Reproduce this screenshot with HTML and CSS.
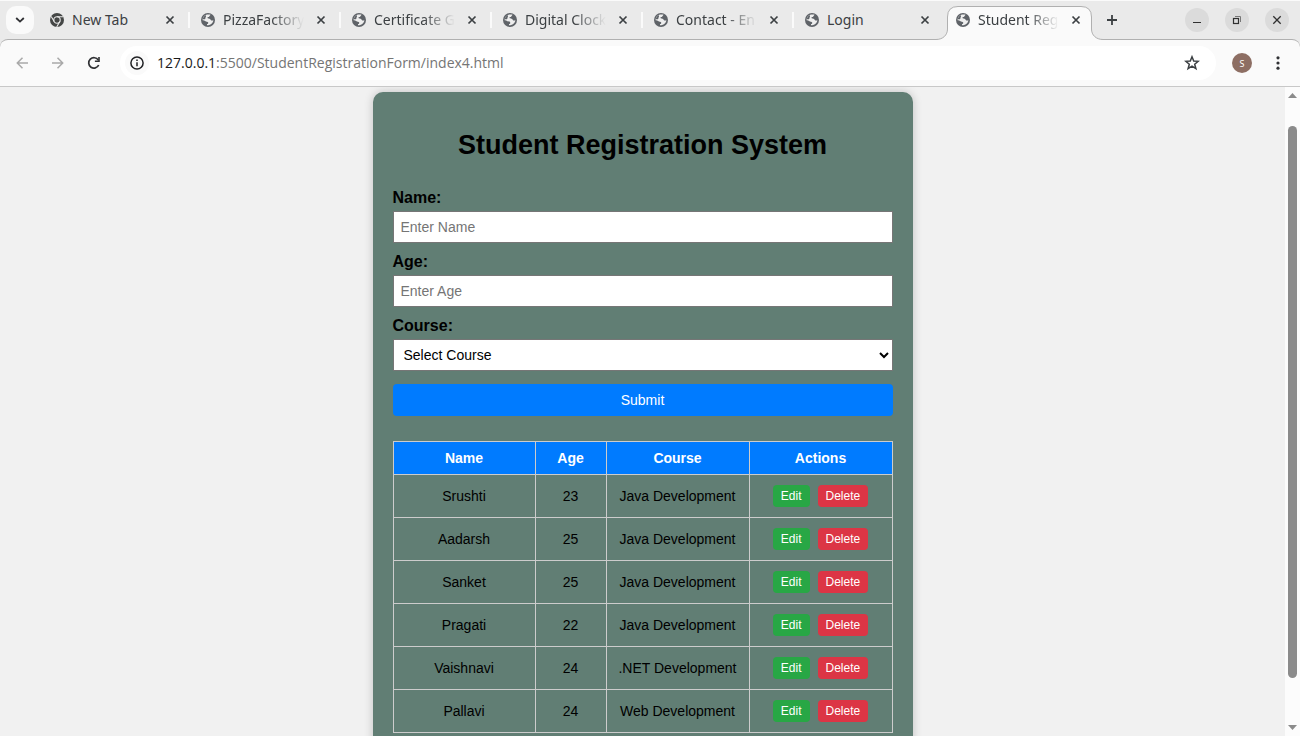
FILE: index.html
```html
<!DOCTYPE html>
<html lang="en">
<head>
<meta charset="utf-8">
<title>Student Registration System</title>
<link rel="stylesheet" href="styles.css">
</head>
<body>
<svg class="defs" aria-hidden="true">
  <symbol id="globe" viewBox="0 0 14 14">
    <circle cx="7" cy="7" r="7" fill="#5f6368"/>
    <path d="M6.2 1.6 9.4 1.5C9.3 2.7 8.4 2.8 8.3 3.6 8.1 4.4 6.5 4 6.4 4.8 6.3 5.8 9.3 5.2 9.8 7 10.2 8 11.7 7.5 12.4 7.3 12.2 9 11 10.6 9.4 11.5 8.6 11.9 7.5 12.4 6 12.3L6 11C7.1 10.9 7.4 10.3 7.2 9.4 6.9 8.2 5.1 8.8 4.1 7.9 3.4 7.2 2.3 7.1 1.6 7.2 1.5 4.6 3.4 2 6.2 1.6Z" fill="#eee"/>
    <path d="M1.5 6.2C2.4 4.6 2.6 3.4 4.7 2.1L5 3.8C4.3 4.2 4.7 5.2 4.2 6.1 3.5 6.6 2.4 6.2 1.5 6.2Z" fill="#5f6368"/>
  </symbol>
  <symbol id="cross" viewBox="0 0 10 10"><path d="M1.5 1.5 8.5 8.5M8.5 1.5 1.5 8.5" fill="none" stroke="#3c4043" stroke-width="1.7"/></symbol>
</svg>

<header class="browser">
  <div class="tabstrip">
    <button class="tab-search" aria-label="Search tabs"><svg width="10" height="6" viewBox="0 0 10 6"><path d="M1.2 1 5 4.6 8.8 1" fill="none" stroke="#303134" stroke-width="1.8"/></svg></button>
    <nav class="tabs">
      <div class="tab"><svg class="favicon" viewBox="0 0 14 14"><circle cx="7" cy="7" r="7" fill="#454746"/><g fill="none" stroke="#eaeaea" stroke-width="1.1"><circle cx="7" cy="7" r="3.2"/><path d="M7 3.8H13.2M4.2 8.6 1.2 3.4M9.8 8.6 6.7 14"/></g></svg><span class="tab-title">New Tab</span><button class="close" aria-label="Close New Tab"><svg><use href="#cross"/></svg></button></div>
      <div class="tab"><svg class="favicon"><use href="#globe"/></svg><span class="tab-title fade">PizzaFactory</span><button class="close" aria-label="Close PizzaFactory"><svg><use href="#cross"/></svg></button></div>
      <div class="tab"><svg class="favicon"><use href="#globe"/></svg><span class="tab-title fade">Certificate G</span><button class="close" aria-label="Close Certificate"><svg><use href="#cross"/></svg></button></div>
      <div class="tab"><svg class="favicon"><use href="#globe"/></svg><span class="tab-title fade">Digital Clock</span><button class="close" aria-label="Close Digital Clock"><svg><use href="#cross"/></svg></button></div>
      <div class="tab"><svg class="favicon"><use href="#globe"/></svg><span class="tab-title fade">Contact - En</span><button class="close" aria-label="Close Contact"><svg><use href="#cross"/></svg></button></div>
      <div class="tab last"><svg class="favicon"><use href="#globe"/></svg><span class="tab-title">Login</span><button class="close" aria-label="Close Login"><svg><use href="#cross"/></svg></button></div>
      <div class="tab active"><svg class="tab-shape" width="167" height="34" viewBox="0 0 167 34"><path d="M0 33.5C7 33.5 11.5 29 11.5 23V11Q11.5.5 22 .5H145Q155.500.5 155.500 11V23C155.500 29 160 33.500 167 33.500V34H0Z" fill="#fafafa"/><path d="M0 33.500C7 33.500 11.500 29 11.500 23V11Q11.500.5 22 .5H145Q155.500.5 155.500 11V23C155.500 29 160 33.500 167 33.500" fill="none" stroke="#b0b0b0"/></svg><svg class="favicon"><use href="#globe"/></svg><span class="tab-title fade">Student Reg</span><button class="close" aria-label="Close Student Registration"><svg><use href="#cross"/></svg></button></div>
    </nav>
    <button class="new-tab" aria-label="New tab"><svg width="12" height="12" viewBox="0 0 12 12"><path d="M6 1V11M1 6H11" stroke="#3c4043" stroke-width="1.8"/></svg></button>
    <div class="window-controls">
      <button aria-label="Minimize"><svg width="10" height="10" viewBox="0 0 10 10"><path d="M1 7.500H9" stroke="#303030"/></svg></button>
      <button aria-label="Restore"><svg width="10" height="10" viewBox="0 0 10 10" fill="none"><path d="M3 1.500H8.500V7" stroke="#777"/><rect x="1.500" y="3.500" width="5" height="5" stroke="#303030" stroke-width="1.2"/></svg></button>
      <button aria-label="Close window"><svg width="10" height="10" viewBox="0 0 10 10"><path d="M1.300 1.300 8.700 8.700M8.700 1.300 1.300 8.700" stroke="#303030" stroke-width="1.300"/></svg></button>
    </div>
  </div>
  <div class="toolbar">
    <button class="tool" aria-label="Back"><svg width="12" height="12" viewBox="0 0 12 12"><path d="M12 6H1.500M6.500.8 1.300 6 6.500 11.200" fill="none" stroke="#a9a9a9" stroke-width="1.500"/></svg></button>
    <button class="tool" aria-label="Forward"><svg width="12" height="12" viewBox="0 0 12 12"><path d="M0 6H10.500M5.500.8 10.700 6 5.500 11.200" fill="none" stroke="#a9a9a9" stroke-width="1.500"/></svg></button>
    <button class="tool" aria-label="Reload"><svg width="14" height="14" viewBox="0 0 14 14"><path d="M11.700 9A5.200 5.200 0 1 1 11.300 4.100" fill="none" stroke="#303134" stroke-width="1.700"/><path d="M12.800 1V6H7.900V4.400H11.200V1Z" fill="#303134"/></svg></button>
    <div class="omnibox">
      <button class="site-info" aria-label="Site information"><svg width="14" height="14" viewBox="0 0 14 14"><circle cx="7" cy="7" r="6.100" fill="none" stroke="#202124" stroke-width="1.500"/><path d="M7 6.200V10.200M7 3.600V5.100" stroke="#202124" stroke-width="1.500"/></svg></button>
      <span class="url"><b>127.0.0.1</b>:5500/StudentRegistrationForm/index4.html</span>
      <button class="star" aria-label="Bookmark"><svg width="16" height="16" viewBox="0 0 16 16"><path d="M8 1.800 9.700 6 14.200 6.300 10.700 9.200 11.900 13.700 8 11.200 4.100 13.700 5.300 9.200 1.800 6.300 6.300 6Z" fill="none" stroke="#3c4043" stroke-width="1.500"/></svg></button>
    </div>
    <button class="avatar" aria-label="Profile">S</button>
    <button class="menu" aria-label="Menu"><svg width="4" height="14" viewBox="0 0 4 14" fill="#303134"><circle cx="2" cy="1.800" r="1.600"/><circle cx="2" cy="7" r="1.600"/><circle cx="2" cy="12.200" r="1.600"/></svg></button>
  </div>
</header>

<div class="viewport">
  <main class="page">
    <section class="card">
      <h2>Student Registration System</h2>
      <form>
        <label for="name">Name:</label>
        <input id="name" type="text" placeholder="Enter Name">
        <label for="age">Age:</label>
        <input id="age" type="text" placeholder="Enter Age">
        <label for="course">Course:</label>
        <select id="course"><option>Select Course</option><option>Java Development</option><option>.NET Development</option><option>Web Development</option></select>
        <button class="submit" type="button">Submit</button>
      </form>
      <table>
        <colgroup><col><col class="narrow"><col class="wide"><col class="wide"></colgroup>
        <thead><tr><th>Name</th><th>Age</th><th>Course</th><th>Actions</th></tr></thead>
        <tbody>
          <tr><td>Srushti</td><td>23</td><td>Java Development</td><td><div class="actions"><button class="edit">Edit</button><button class="delete">Delete</button></div></td></tr>
          <tr><td>Aadarsh</td><td>25</td><td>Java Development</td><td><div class="actions"><button class="edit">Edit</button><button class="delete">Delete</button></div></td></tr>
          <tr><td>Sanket</td><td>25</td><td>Java Development</td><td><div class="actions"><button class="edit">Edit</button><button class="delete">Delete</button></div></td></tr>
          <tr><td>Pragati</td><td>22</td><td>Java Development</td><td><div class="actions"><button class="edit">Edit</button><button class="delete">Delete</button></div></td></tr>
          <tr><td>Vaishnavi</td><td>24</td><td>.NET Development</td><td><div class="actions"><button class="edit">Edit</button><button class="delete">Delete</button></div></td></tr>
          <tr><td>Pallavi</td><td>24</td><td>Web Development</td><td><div class="actions"><button class="edit">Edit</button><button class="delete">Delete</button></div></td></tr>
        </tbody>
      </table>
    </section>
  </main>
  <div class="scrollbar" aria-hidden="true">
    <svg width="9" height="5" viewBox="0 0 9 5"><path d="M0 5 4.500 0 9 5Z" fill="#8b8b8b"/></svg>
    <div class="track"><div class="thumb"></div></div>
    <svg width="9" height="5" viewBox="0 0 9 5"><path d="M0 0 4.500 5 9 0Z" fill="#8b8b8b"/></svg>
  </div>
</div>
</body>
</html>
```
FILE: styles.css
```css
* { box-sizing: border-box; }

body {
  margin: 0;
  height: 100vh;
  display: flex;
  flex-direction: column;
  overflow: hidden;
  font-family: "Liberation Sans", Arial, sans-serif;
}

button { border: 0; padding: 0; font-family: inherit; }
.defs { display: none; }

.browser {
  flex: none;
  background: #eaeaea;
  border-top: 1px solid #fafafa;
  font-family: "Noto Sans", sans-serif;
}
.browser button {
  display: flex;
  align-items: center;
  justify-content: center;
  background: none;
  flex: none;
}

.tabstrip {
  display: flex;
  align-items: center;
  height: 38px;
  padding: 0 11px 0 6px;
}
.browser .tab-search {
  width: 28px;
  height: 28px;
  margin-right: 4px;
  border-radius: 10px;
  background: #fafafa;
}
.tabs { display: flex; flex: 0 1 1057px; min-width: 0; }
.tab {
  position: relative;
  display: flex;
  align-items: center;
  flex: 1 1 0;
  min-width: 0;
  height: 38px;
  padding: 0 14px 0 12px;
}
.tab:not(.active):not(.last)::after {
  content: "";
  position: absolute;
  right: -1px;
  top: 11px;
  width: 2px;
  height: 16px;
  background: #fafafa;
}
.tab-shape { position: absolute; left: -8px; bottom: -1px; z-index: 1; }
.active > :not(.tab-shape) { z-index: 2; }
.favicon { width: 14px; height: 14px; flex: none; margin-right: 8px; }
.tab-title {
  flex: 1;
  min-width: 0;
  overflow: hidden;
  white-space: nowrap;
  font-size: 14px;
  line-height: 20px;
  color: #3c4043;
}
.fade {
  -webkit-mask-image: linear-gradient(to right, #000 60%, transparent 100%);
  mask-image: linear-gradient(to right, #000 60%, transparent 100%);
}
.close { width: 10px; height: 10px; margin-left: 12px; }
.close svg { width: 10px; height: 10px; }
.new-tab { width: 28px; height: 28px; margin-left: 3px; }
.window-controls { display: flex; gap: 16px; margin-left: auto; }
.browser .window-controls button {
  width: 24px;
  height: 24px;
  border-radius: 50%;
  background: #dbdbdb;
}

.toolbar {
  display: flex;
  align-items: center;
  height: 48px;
  padding: 0 8px;
  background: #fafafa;
  border-top: 1px solid #b0b0b0;
  border-bottom: 1px solid #c8c8c8;
  border-radius: 8px 8px 0 0;
}
.tool { width: 28px; height: 28px; margin-right: 8px; }
.omnibox {
  display: flex;
  align-items: center;
  flex: 1;
  min-width: 0;
  height: 34px;
  margin: 0 16px 0 4px;
  padding: 0 12px 0 5px;
  border-radius: 17px;
  background: #fff;
}
.browser .site-info {
  width: 24px;
  height: 24px;
  border-radius: 50%;
  background: #fafafa;
}
.url {
  flex: 1;
  margin-left: 8px;
  font-family: "Open Sans", "Noto Sans", sans-serif;
  font-size: 14px;
  line-height: 20px;
  color: #757575;
  white-space: nowrap;
  overflow: hidden;
}
.url b { font-weight: 400; color: #1a1a1a; }
.star { width: 24px; height: 24px; }
.browser .avatar {
  width: 20px;
  height: 20px;
  border-radius: 50%;
  background: #8d6e63;
  color: #fff;
  font-size: 9px;
}
.menu { width: 28px; height: 28px; margin-left: 12px; }

.viewport { flex: 1; min-height: 0; display: flex; }
.page {
  flex: 1;
  min-width: 0;
  overflow: hidden;
  padding: 5px 20px 20px;
  background: #f1f1f1;
}
.card {
  max-width: 540px;
  margin: 0 auto;
  padding: 20px;
  background: #617e74;
  border-radius: 10px;
  box-shadow: 0 0 10px rgba(0, 0, 0, 0.2);
}
h2 {
  margin: 17px 0 28px;
  font-size: 27px;
  line-height: 32px;
  text-align: center;
}
label {
  display: block;
  margin-bottom: 4px;
  font-size: 16px;
  line-height: 18px;
  font-weight: 700;
}
form input,
form select {
  display: block;
  width: 100%;
  height: 32px;
  margin-bottom: 10px;
  padding: 0 7px;
  border: 1px solid #767676;
  border-radius: 0;
  background-color: #fff;
  color: #000;
  font-family: inherit;
  font-size: 14px;
}
form select { margin-bottom: 13px; padding: 0 6px; }
input::placeholder { color: #757575; }
.submit {
  display: block;
  width: 100%;
  height: 32px;
  border-radius: 4px;
  background: #007bff;
  color: #fff;
  font-size: 14px;
}
table {
  width: 100%;
  margin-top: 25px;
  border-collapse: collapse;
  table-layout: fixed;
  font-size: 14px;
  line-height: 16px;
  text-align: center;
}
.wide { width: 143px; }
.narrow { width: 71px; }
th, td { border: 1px solid #ccc; padding: 10px 0; }
th { padding: 8px 0; background: #007bff; color: #fff; }
.actions { display: flex; justify-content: center; gap: 8px; }
.actions button {
  padding: 4px 8px;
  border-radius: 4px;
  color: #fff;
  font-size: 12px;
  line-height: 14px;
}
.edit { background: #28a745; }
.delete { background: #dc3545; }

.scrollbar {
  flex: none;
  display: flex;
  flex-direction: column;
  align-items: center;
  width: 15px;
  padding: 6px 0;
  background: #fcfcfc;
}
.scrollbar svg { flex: none; }
.track {
  flex: 1;
  display: grid;
  grid-template-rows: 28fr 552fr 47fr;
  width: 9px;
}
.thumb { grid-row: 2; border-radius: 5px; background: #8b8b8b; }
```
